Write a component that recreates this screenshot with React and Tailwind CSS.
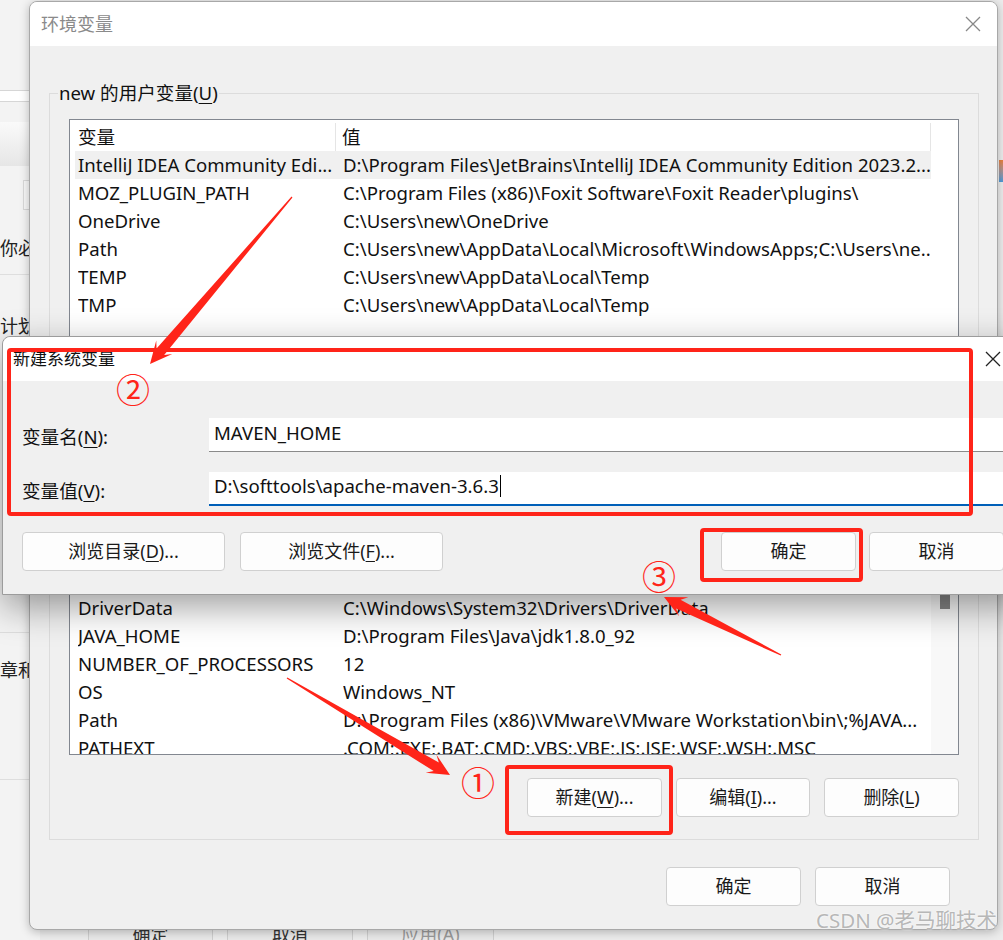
import React from 'react';

const FONT = "font-['Noto_Sans','Noto_Sans_CJK_SC',sans-serif]";

const userVars = [
  ['IntelliJ IDEA Community Edi...', 'D:\\Program Files\\JetBrains\\IntelliJ IDEA Community Edition 2023.2...', true],
  ['MOZ_PLUGIN_PATH', 'C:\\Program Files (x86)\\Foxit Software\\Foxit Reader\\plugins\\'],
  ['OneDrive', 'C:\\Users\\new\\OneDrive'],
  ['Path', 'C:\\Users\\new\\AppData\\Local\\Microsoft\\WindowsApps;C:\\Users\\ne...'],
  ['TEMP', 'C:\\Users\\new\\AppData\\Local\\Temp'],
  ['TMP', 'C:\\Users\\new\\AppData\\Local\\Temp'],
];

const sysVars = [
  ['ComSpec', 'C:\\Windows\\system32\\cmd.exe'],
  ['DriverData', 'C:\\Windows\\System32\\Drivers\\DriverData'],
  ['JAVA_HOME', 'D:\\Program Files\\Java\\jdk1.8.0_92'],
  ['NUMBER_OF_PROCESSORS', '12'],
  ['OS', 'Windows_NT'],
  ['Path', 'D:\\Program Files (x86)\\VMware\\VMware Workstation\\bin\\;%JAVA...'],
  ['PATHEXT', '.COM;.EXE;.BAT;.CMD;.VBS;.VBE;.JS;.JSE;.WSF;.WSH;.MSC'],
];

const Row = ({ name, value, selected }) => (
  <div className={`grid h-[28px] grid-cols-[265px_1fr] items-center whitespace-nowrap pl-[3px] ${selected ? 'bg-[#f0f0f0]' : ''}`}>
    <span className="overflow-hidden">{name}</span>
    <span className="overflow-hidden">{value}</span>
  </div>
);

const Btn = ({ children, className = '' }) => (
  <button className={`flex h-[39px] items-center justify-center rounded-[4px] border border-[#d0d0d0] bg-[#fdfdfd] text-[18px] text-[#1a1a1a] ${className}`}>
    {children}
  </button>
);

const U = ({ children }) => <span className="underline underline-offset-[3px]">{children}</span>;

const CloseX = ({ className = '', stroke = '#888' }) => (
  <svg className={className} width="16" height="16" viewBox="0 0 16 16">
    <path d="M1 1L15 15M15 1L1 15" stroke={stroke} strokeWidth="1.3" />
  </svg>
);

function Arrow({ x1, y1, x2, y2 }) {
  const dx = x2 - x1;
  const dy = y2 - y1;
  const len = Math.hypot(dx, dy);
  const ux = dx / len;
  const uy = dy / len;
  const nx = -uy;
  const ny = ux;
  const L = 22;
  const W = 10.5;
  const w = 5;
  const t = 0.6;
  const bx = x2 - ux * L;
  const by = y2 - uy * L;
  const sx = x2 - ux * (L - 6);
  const sy = y2 - uy * (L - 6);
  const pts = [
    [x1 + nx * t, y1 + ny * t],
    [sx + nx * w, sy + ny * w],
    [bx + nx * W, by + ny * W],
    [x2, y2],
    [bx - nx * W, by - ny * W],
    [sx - nx * w, sy - ny * w],
    [x1 - nx * t, y1 - ny * t],
  ];
  return <polygon points={pts.map((p) => p.join(',')).join(' ')} fill="#ff2419" />;
}

export default function App() {
  return (
    <div className={`relative h-[940px] w-[1003px] overflow-hidden bg-[#ececec] ${FONT} text-[#111]`}>
      {/* background app (left strip) */}
      <div className="absolute left-0 top-0 h-full w-[40px] bg-[#f3f3f3] text-[18px] text-[#222]">
        <div className="mt-[90px] h-[12px] border-y border-[#d6d6d6] bg-white" />
        <div className="mt-[20px] h-[44px] bg-gradient-to-b from-[#fafafa] to-[#e6e6e6]" />
        <div className="ml-[23px] mt-[14px] h-[30px] border border-[#d8d8d8] bg-[#f7f7f7]" />
        <div className="mt-[24px] whitespace-nowrap leading-[28px]">你必</div>
        <div className="mt-[12px] border-t border-[#dedede]" />
        <div className="mt-[37px] whitespace-nowrap leading-[28px]">计划</div>
        <div className="mt-[292px] border-t border-[#dedede]" />
        <div className="mt-[23px] whitespace-nowrap leading-[28px]">章和i</div>
        <div className="mt-[95px] border-t border-[#dedede]" />
      </div>
      {/* background app buttons at the bottom */}
      <div className="absolute left-[88px] top-[914px] flex gap-[14px] text-[18px] text-[#333]">
        <div className="flex h-[40px] w-[125px] items-center justify-center border border-[#cfcfcf] bg-[#e9e9e9]">确定</div>
        <div className="flex h-[40px] w-[126px] items-center justify-center border border-[#cfcfcf] bg-[#e9e9e9]">取消</div>
        <div className="flex h-[40px] w-[127px] items-center justify-center border border-[#cfcfcf] bg-[#e9e9e9] text-[#999]">应用(A)</div>
      </div>
      <div className="absolute right-0 top-[160px] h-[22px] w-[4px] bg-gradient-to-b from-[#e8803a] to-[#4a9ad8]" />

      {/* 环境变量 dialog */}
      <div className="absolute left-[29px] top-[1px] flex h-[929px] w-[969px] flex-col overflow-hidden rounded-[8px] border border-[#a8a8a8] bg-[#f0f0f0] shadow-[0_2px_10px_rgba(0,0,0,0.25)]">
        <div className="flex h-[44px] shrink-0 items-center justify-between bg-white pl-[11px] pr-[16px]">
          <span className="text-[18px] text-[#8a8a8a]">环境变量</span>
          <CloseX />
        </div>
        <div className="flex flex-col px-[19px] pt-[34px] text-[18.6px]">
          <fieldset className="border border-[#dcdcdc] px-[19px] pb-[22px]">
            <legend className="-ml-[11px] px-[1px] leading-[26px] text-[#111]">
              new 的用户变量(<U>U</U>)
            </legend>
            <div className="mt-[13px] h-[250px] overflow-hidden border border-[#828790] bg-white">
              <div className="flex h-[31px] items-stretch pt-[3px]">
                <div className="flex w-[266px] items-center border-r border-[#e5e5e5] pl-[8px]">变量</div>
                <div className="flex w-[595px] items-center border-r border-[#e5e5e5] pl-[6px]">值</div>
              </div>
              <div className="ml-[5px] w-[856px]">
                {userVars.map(([n, v, s]) => (
                  <Row key={n} name={n} value={v} selected={s} />
                ))}
              </div>
            </div>
            <div className="mt-[190px] flex h-[196px] overflow-hidden border border-[#828790] bg-white">
              <div className="ml-[5px] w-[856px] pt-[6px]">
                {sysVars.map(([n, v]) => (
                  <Row key={n} name={n} value={v} />
                ))}
              </div>
              <div className="w-[27px] bg-[#f8f8f8] pt-[12px]">
                <div className="mx-auto h-[37px] w-[10px] bg-[#858585]" />
              </div>
            </div>
            <div className="mt-[23px] flex justify-end gap-[14px]">
              <Btn className="w-[135px]">新建(<U>W</U>)...</Btn>
              <Btn className="w-[134px]">编辑(<U>I</U>)...</Btn>
              <Btn className="w-[135px]">删除(<U>L</U>)</Btn>
            </div>
          </fieldset>
          <div className="mt-[27px] flex justify-end gap-[14px] pr-[28px]">
            <Btn className="w-[135px]">确定</Btn>
            <Btn className="w-[135px]">取消</Btn>
          </div>
        </div>
      </div>

      {/* 新建系统变量 dialog */}
      <div className="absolute left-[2px] top-[336px] flex h-[259px] w-[1030px] flex-col rounded-tl-[8px] border border-[#9c9c9c] bg-[#f0f0f0] shadow-[0_12px_36px_rgba(0,0,0,0.38)]">
        <div className="flex h-[44px] shrink-0 items-center justify-between rounded-tl-[8px] bg-white pl-[10px] pr-[30px]">
          <span className="text-[17px] text-[#111]">新建系统变量</span>
          <CloseX stroke="#222" />
        </div>
        <div className="flex flex-col pl-[19px] pt-[37px] text-[18.6px]">
          <div className="flex h-[34px] items-center">
            <span className="mt-[3px] w-[187px]">变量名(<U>N</U>):</span>
            <div className="flex h-[34px] flex-1 items-center border-b border-[#8a8a8a] bg-white pl-[5px] pb-[4px]">
              MAVEN_HOME
            </div>
          </div>
          <div className="mt-[20px] flex h-[34px] items-center">
            <span className="mt-[3px] w-[187px]">变量值(<U>V</U>):</span>
            <div className="flex h-[34px] flex-1 items-center border-b-2 border-[#005fb8] bg-white pl-[5px] pb-[4px]">
              D:\softtools\apache-maven-3.6.3
              <span className="ml-[1px] inline-block h-[22px] w-[1px] bg-black" />
            </div>
          </div>
          <div className="mt-[26px] flex gap-[15px]">
            <Btn className="w-[203px]">浏览目录(<U>D</U>)...</Btn>
            <Btn className="w-[203px]">浏览文件(<U>F</U>)...</Btn>
            <div className="ml-[263px] flex gap-[13px]">
              <Btn className="w-[135px]">确定</Btn>
              <Btn className="w-[135px]">取消</Btn>
            </div>
          </div>
        </div>
      </div>

      {/* annotations */}
      <div className="pointer-events-none absolute left-[7px] top-[348px] h-[168px] w-[966px] rounded-[4px] border-4 border-[#ff2419]" />
      <div className="pointer-events-none absolute left-[700px] top-[528px] h-[54px] w-[163px] rounded-[4px] border-4 border-[#ff2419]" />
      <div className="pointer-events-none absolute left-[505px] top-[765px] h-[70px] w-[168px] rounded-[4px] border-4 border-[#ff2419]" />
      <span className="absolute left-[116px] top-[370px] text-[34px] leading-[40px] text-[#ff2419]">②</span>
      <span className="absolute left-[642px] top-[557px] text-[34px] leading-[40px] text-[#ff2419]">③</span>
      <span className="absolute left-[461px] top-[763px] text-[34px] leading-[40px] text-[#ff2419]">①</span>
      <svg className="pointer-events-none absolute left-0 top-0" width="1003" height="940">
        <Arrow x1={292} y1={197} x2={150} y2={364} />
        <Arrow x1={781} y1={655} x2={664} y2={597} />
        <Arrow x1={287} y1={678} x2={450} y2={775} />
      </svg>
      <span className="absolute left-[816px] top-[905px] text-[20.5px] text-[#a5a5a5]/80 [text-shadow:0_0_2px_white]">
        CSDN @老马聊技术
      </span>
    </div>
  );
}
